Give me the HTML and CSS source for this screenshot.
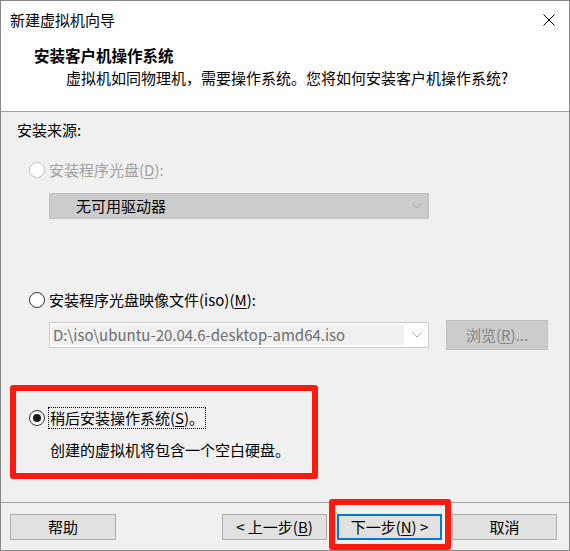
FILE: index.html
```html
<!DOCTYPE html>
<html lang="zh-CN">
<head>
<meta charset="utf-8">
<title>新建虚拟机向导</title>
<link rel="stylesheet" href="styles.css">
</head>
<body>
<div class="window">
  <div class="titlebar">
    <span class="title">新建虚拟机向导</span>
    <svg class="close" width="12" height="12" viewBox="0 0 12 12"><path d="M0.5 0.5 L11.5 11.5 M11.5 0.5 L0.5 11.5" stroke="#000" stroke-width="1" fill="none"/></svg>
  </div>
  <div class="header">
    <div class="h-title">安装客户机操作系统</div>
    <div class="h-sub">虚拟机如同物理机，需要操作系统。您将如何安装客户机操作系统?</div>
  </div>
  <div class="content">
    <div class="label">安装来源:</div>
    <div class="radio-row disabled"><span class="radio"></span><span>安装程序光盘(<u>D</u>):</span></div>
    <div class="select">
      <span>无可用驱动器</span>
      <svg class="chev" width="10" height="6" viewBox="0 0 10 6"><path d="M0.5 0.5 L5 5 L9.5 0.5" stroke="#a6a6a6" fill="none"/></svg>
    </div>
    <div class="radio-row spaced"><span class="radio"></span><span>安装程序光盘映像文件(iso)(<u>M</u>):</span></div>
    <div class="iso-row">
      <div class="combo">
        <span class="combo-text">D:\iso\ubuntu-20.04.6-desktop-amd64.iso</span>
        <svg class="chev" width="10" height="6" viewBox="0 0 10 6"><path d="M0.5 0.5 L5 5 L9.5 0.5" stroke="#a6a6a6" fill="none"/></svg>
      </div>
      <div class="btn browse">浏览(<u>R</u>)...</div>
    </div>
    <div class="highlight">
      <div class="radio-row"><span class="radio checked"></span><span class="focus">稍后安装操作系统(<u>S</u>)。</span></div>
      <div class="desc">创建的虚拟机将包含一个空白硬盘。</div>
    </div>
  </div>
  <div class="footer">
    <div class="btn">帮助</div>
    <div class="spacer"></div>
    <div class="btn">&lt; 上一步(<u>B</u>)</div>
    <div class="btn primary">下一步(<u>N</u>) &gt;</div>
    <div class="btn">取消</div>
  </div>
  <div class="annot"></div>
</div>
</body>
</html>
```
FILE: styles.css
```css
* { box-sizing: border-box; }
html, body { margin: 0; padding: 0; background: #f0f0f0; }
body {
  font-family: "Noto Sans CJK SC", "Microsoft YaHei", sans-serif;
  font-size: 15px;
  line-height: 20px;
  color: #000;
}
.window {
  position: relative;
  width: 570px;
  height: 551px;
  border: 1px solid #888888;
  display: flex;
  flex-direction: column;
  background: #f0f0f0;
}
.titlebar {
  height: 38px;
  background: #fff;
  display: flex;
  align-items: center;
  justify-content: space-between;
  padding: 0 14px 0 9px;
}
.close { display: block; }
.header {
  height: 73px;
  background: #fff;
  border-bottom: 1px solid #a0a0a0;
  padding: 6px 0 0 33px;
}
.h-title { font-weight: bold; font-size: 15.5px; }
.h-sub { margin-top: 3px; padding-left: 32px; }
.content {
  flex: 1;
  display: flex;
  flex-direction: column;
  align-items: flex-start;
  padding-top: 8px;
}
.label { padding-left: 16px; }
.radio-row {
  display: flex;
  align-items: center;
  gap: 4px;
  padding-left: 28px;
  margin-top: 20px;
}
.radio-row.spaced { margin-top: 71px; }
.radio-row.disabled { color: #a0a0a0; }
.radio {
  width: 16px;
  height: 16px;
  border-radius: 50%;
  border: 1px solid #333;
  background: #fff;
  display: flex;
  align-items: center;
  justify-content: center;
}
.disabled .radio { border-color: #c4c4c4; }
.radio.checked::after {
  content: "";
  width: 8px;
  height: 8px;
  border-radius: 50%;
  background: #1a1a1a;
}
u { text-decoration-thickness: 1px; text-underline-offset: 2px; }
.select {
  margin: 13px 0 0 48px;
  width: 380px;
  height: 26px;
  background: #cccccc;
  border: 1px solid #bfbfbf;
  display: flex;
  align-items: center;
  justify-content: space-between;
  padding: 0 6px 0 26px;
}
.chev { display: block; }
.iso-row {
  margin: 10px 0 0 48px;
  display: flex;
  align-items: center;
  gap: 17px;
}
.combo {
  width: 380px;
  height: 26px;
  background: #fff;
  border: 1px solid #cccccc;
  display: flex;
  align-items: center;
  padding: 2px 6px 2px 2px;
}
.combo-text {
  flex: 1;
  height: 100%;
  background: #f0f0f0;
  color: #6d6d6d;
  padding-left: 1px;
  margin-right: 8px;
  display: flex;
  align-items: center;
  white-space: nowrap;
}
.btn {
  width: 105px;
  height: 26px;
  background: #e1e1e1;
  border: 1px solid #adadad;
  display: flex;
  align-items: center;
  justify-content: center;
  white-space: nowrap;
}
.browse {
  width: 102px;
  height: 30px;
  background: #cccccc;
  border-color: #bfbfbf;
  color: #838383;
}
.highlight {
  margin: 35px 0 0 9px;
  width: 308px;
  border: 6px solid #ff1a0d;
  border-radius: 3px;
  padding: 0 0 13px 0;
}
.highlight .radio-row { margin-top: 17px; padding-left: 13px; }
.focus { outline: 1px dotted #000; outline-offset: 0; padding: 0 1px; }
.desc { margin-top: 12px; padding-left: 34px; }
.footer {
  height: 48px;
  border-top: 1px solid #a0a0a0;
  display: flex;
  align-items: flex-start;
  gap: 10px;
  padding: 11px 12px 0 9px;
}
.footer .btn:first-child { width: 106px; }
.spacer { flex: 1; }
.primary { border: 2px solid #0078d7; }
.annot {
  position: absolute;
  left: 328px;
  top: 498px;
  width: 122px;
  height: 51px;
  border: 6px solid #ff1a0d;
  border-radius: 3px;
}
```
